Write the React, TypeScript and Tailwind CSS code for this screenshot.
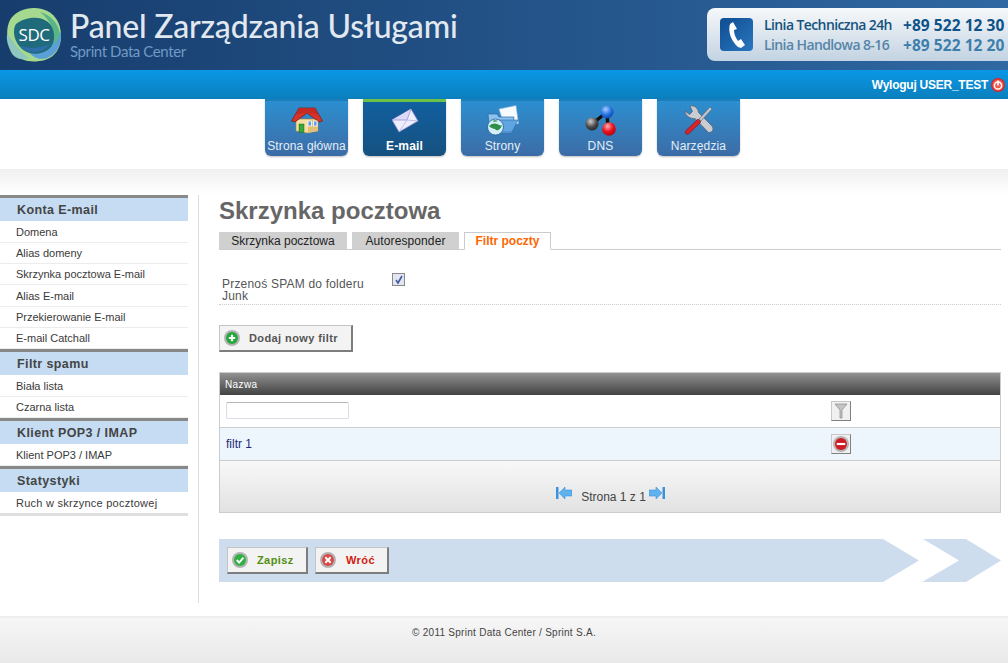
import React from 'react';

const sideMenu = [
  {
    title: 'Konta E-mail',
    items: [
      { label: 'Domena' },
      { label: 'Alias domeny' },
      { label: 'Skrzynka pocztowa E-mail' },
      { label: 'Alias E-mail', tall: true },
      { label: 'Przekierowanie E-mail' },
      { label: 'E-mail Catchall' },
    ],
  },
  { title: 'Filtr spamu', items: [{ label: 'Biała lista' }, { label: 'Czarna lista' }] },
  { title: 'Klient POP3 / IMAP', items: [{ label: 'Klient POP3 / IMAP' }] },
  { title: 'Statystyki', items: [{ label: 'Ruch w skrzynce pocztowej', wide: true }] },
];

const Logo = () => (
  <svg width="56" height="56" viewBox="0 0 56 56" className="shrink-0">
    <path d="M4 14C10 4 24 0 36 3c12 3 19 13 19 27 0 12-6 21-16 24-12 3-25 2-32-8C1 37-1 24 4 14z" fill="#a5d98f" />
    <path d="M1 28c6 6 10 16 22 24-8 3-15 0-18-6C2 40 0 34 1 28z" fill="#8fc6bd" />
    <path d="M18 40c10 2 26-2 37-14 1 12-4 22-14 26-9 3-17-2-23-12z" fill="#5a9fd8" />
    <path d="M34 6c10 3 18 10 20 22-1 4-3 8-6 11 2-12-4-26-14-33z" fill="#59b487" />
    <path d="M10 18c8-7 24-9 32-2 7 6 8 18 3 25-6 7-18 9-26 4C10 40 5 26 10 18z" fill="#1f6b7c" />
    <path d="M14 40c10 3 22 2 30-2-5 8-17 10-25 6-2-1-4-2-5-4z" fill="#2e6eaa" />
    <text x="28" y="35" textAnchor="middle" fill="#fff" fontSize="17" fontFamily="'Open Sans', sans-serif" letterSpacing="-0.5">SDC</text>
  </svg>
);

const HomeIcon = () => (
  <svg width="32" height="27" viewBox="0 0 32 27">
    <path d="M5 12h22v12l-11 2-11-2z" fill="#f6dfa0" stroke="#a98444" strokeWidth="0.6" />
    <path d="M17 26l10-2V12H17z" fill="#e2bf78" />
    <path d="M0.5 14 8 1h16l7.5 13-3.5 1L16 6 4 15z" fill="#d8322a" stroke="#6d2a1c" strokeWidth="0.8" />
    <path d="M8 1.500h16l3 6-11-2-11 2z" fill="#c72a24" />
    <rect x="8" y="17" width="5" height="8.500" fill="#38a63a" stroke="#1c6b24" strokeWidth="0.5" />
    <rect x="17" y="14" width="3.500" height="5" fill="#5aa0e8" stroke="#fff" strokeWidth="0.8" />
    <rect x="22.500" y="14" width="3.500" height="5" fill="#5aa0e8" stroke="#fff" strokeWidth="0.8" />
  </svg>
);

const MailIcon = () => (
  <svg width="28" height="25" viewBox="0 0 28 25">
    <path d="M1 12 20 1l7 12-19 11z" fill="#efeefe" stroke="#8a84c8" strokeWidth="0.8" />
    <path d="M1 12 16 12 20 1" fill="#dcdaf8" stroke="#9b96d4" strokeWidth="0.8" />
    <path d="M8 24l8-12 11 1" fill="none" stroke="#b5b1e2" strokeWidth="0.8" />
  </svg>
);

const FolderIcon = () => (
  <svg width="32" height="31" viewBox="0 0 32 31">
    <path d="M12 4 29 0.500l2.500 18-14 3z" fill="#f7faff" stroke="#8fb4d8" strokeWidth="0.6" />
    <path d="M1 9h9l2 3h15l-2 16H3z" fill="#8dc3ee" stroke="#2a6aa8" strokeWidth="0.7" />
    <path d="M8 15h23l-6 12H8z" fill="#5ea5e2" stroke="#2a6aa8" strokeWidth="0.6" />
    <circle cx="8.500" cy="22" r="8" fill="#d4eefa" stroke="#1d5f94" strokeWidth="0.8" />
    <path d="M2 21c3-3 6-3 8-2s4 2 5 1c-1 4-4 6-6 5-1-2-5-1-7-4z" fill="#2f8f4a" />
    <path d="M5 16c2-1 4-1 6 0-2 1-4 1-6 0z" fill="#2f8f4a" />
  </svg>
);

const DnsIcon = () => (
  <svg width="32" height="31" viewBox="0 0 32 31">
    <defs>
      <radialGradient id="dnsBlue" cx="0.4" cy="0.3" r="0.8">
        <stop offset="0" stopColor="#a8ccff" />
        <stop offset="0.55" stopColor="#1f6fe0" />
        <stop offset="1" stopColor="#0b3f9a" />
      </radialGradient>
      <radialGradient id="dnsGray" cx="0.4" cy="0.3" r="0.8">
        <stop offset="0" stopColor="#d0d0d0" />
        <stop offset="0.55" stopColor="#4a4a4a" />
        <stop offset="1" stopColor="#1c1c1c" />
      </radialGradient>
      <radialGradient id="dnsRed" cx="0.4" cy="0.3" r="0.8">
        <stop offset="0" stopColor="#ffb0b0" />
        <stop offset="0.5" stopColor="#ee0f1c" />
        <stop offset="1" stopColor="#a00610" />
      </radialGradient>
    </defs>
    <path d="M22 7 7 19M22 7l1 17" stroke="#111" strokeWidth="3.500" />
    <circle cx="22" cy="7" r="6.500" fill="url(#dnsBlue)" />
    <circle cx="7" cy="19" r="6.500" fill="url(#dnsGray)" />
    <circle cx="24" cy="24" r="6.800" fill="url(#dnsRed)" />
  </svg>
);

const ToolsIcon = () => (
  <svg width="30" height="30" viewBox="0 0 30 30">
    <path d="M6 1c4-1 8 2 8.500 6.500L28 21c2 2.500 1 7-3.500 6.500L11 13.500C6 14 1 10.500 1 6l4.500 3.500 3-3z" fill="#c9cdd3" stroke="#5d6168" strokeWidth="0.8" />
    <path d="M1.500 26 14 14l3 3L4.500 29c-2 1-4-1-3-3z" fill="#d8232a" stroke="#7a1418" strokeWidth="0.6" />
    <path d="M15 14 26 2l2 2-11 12z" fill="#c2c6cc" stroke="#5d6168" strokeWidth="0.6" />
  </svg>
);

const RoundIcon = ({ fill, children }: { fill: string; children: React.ReactNode }) => (
  <svg width="16" height="16" viewBox="0 0 15 15">
    <circle cx="7.500" cy="7.500" r="7.500" fill="#b4b4b4" />
    <circle cx="7.500" cy="7.500" r="5.600" fill={fill} />
    {children}
  </svg>
);

const navTabs = [
  { label: 'Strona główna', icon: <HomeIcon /> },
  { label: 'E-mail', icon: <MailIcon />, active: true },
  { label: 'Strony', icon: <FolderIcon /> },
  { label: 'DNS', icon: <DnsIcon /> },
  { label: 'Narzędzia', icon: <ToolsIcon /> },
];

const ActionButton = ({ icon, label, color, className }: { icon: React.ReactNode; label: string; color: string; className: string }) => (
  <button className={`flex h-[27px] items-center bg-[#f3f3f3] border border-[#c4c4c4] border-r-2 border-b-2 border-r-[#7d7d7d] border-b-[#7d7d7d] pl-[4px] text-[11px] font-bold tracking-[0.4px] ${color} ${className}`}>
    {icon}
    {label}
  </button>
);

const PagerArrow = ({ flip }: { flip?: boolean }) => (
  <svg width="16" height="15" viewBox="0 0 16 15" className={flip ? '-scale-x-100' : ''}>
    <rect x="0" y="1" width="2.500" height="12" fill="#3b93dc" />
    <path d="M3 7 9 1v3h7v6H9v3z" fill="#5fb2ee" stroke="#3b93dc" strokeWidth="0.6" />
  </svg>
);

export default function App() {
  return (
    <div className="w-[1008px] h-[663px] overflow-hidden bg-white font-['Liberation_Sans',Arial,sans-serif] text-[#444]">
      <header className="flex h-[70px] bg-gradient-to-r from-[#173d6d] to-[#2f68a2]">
        <div className="ml-[6px] mt-[6px]">
          <Logo />
        </div>
        <div className="ml-[8px] mt-[7px] font-['Lato',sans-serif]">
          <div className="h-[37px] text-[32px] font-medium leading-[37px] tracking-[-0.2px] text-[#e2e8f0] whitespace-nowrap">Panel Zarządzania Usługami</div>
          <div className="text-[15px] leading-[14px] tracking-[-0.4px] text-[#6f9ac4]">Sprint Data Center</div>
        </div>
        <div className="ml-auto mt-[8px] flex h-[53px] w-[301px] items-center rounded-l-lg bg-gradient-to-b from-[#f6f8fa] to-[#c3d3e2] pl-[13px]">
          <div className="flex h-[33px] w-[33px] items-center justify-center rounded-[4px] bg-gradient-to-br from-[#0e4d91] to-[#2a77bf]">
            <svg width="20" height="28" viewBox="0 0 20 28">
              <path d="M6 1 3 3C1 9 3 19 11 26l3 1 4-3-4-6-3 2C8 16 7 12 7 9l3-1z" fill="#fff" />
            </svg>
          </div>
          <div className="ml-[11px] font-['Open_Sans',sans-serif] text-[14px] leading-[20px] tracking-[-0.6px] whitespace-nowrap">
            <div className="flex font-semibold text-[#15527f]">
              <span className="w-[139px]">Linia Techniczna 24h</span>
              <span className="text-[15.5px] font-bold tracking-[0.05px] text-[#0e5388]">+89 522 12 30</span>
            </div>
            <div className="flex font-semibold text-[#5585a8]">
              <span className="w-[139px]">Linia Handlowa 8-16</span>
              <span className="text-[15.5px] font-bold tracking-[0.05px] text-[#3d7eac]">+89 522 12 20</span>
            </div>
          </div>
        </div>
      </header>

      <div className="flex h-[29px] items-center justify-end bg-gradient-to-b from-[#0a97e6] to-[#0b7fbd] pr-[3px] text-[12px] font-bold tracking-[-0.25px] text-white">
        <span className="mt-[1px]">Wyloguj USER_TEST</span>
        <svg width="14" height="14" viewBox="0 0 14 14" className="ml-[3px]">
          <circle cx="7" cy="7" r="7" fill="#d8282c" />
          <circle cx="7" cy="7" r="5.500" fill="#ee5a50" />
          <circle cx="7" cy="7.500" r="3.600" fill="none" stroke="#fff" strokeWidth="1.500" />
          <path d="M7 2.500v5" stroke="#fff" strokeWidth="1.600" />
        </svg>
      </div>

      <nav className="flex h-[70px] gap-[15px] pl-[265px]">
        {navTabs.map((tab) => (
          <div
            key={tab.label}
            className={`flex h-[57px] w-[83px] flex-col items-center rounded-b-[6px] shadow-[0_1px_2px_rgba(0,0,0,0.25)] ${
              tab.active
                ? 'border-t-[3px] border-t-[#6cc04a] bg-gradient-to-b from-[#105f9f] to-[#16517f] font-bold text-white'
                : 'border-t-[2px] border-t-[#1b7dbb] bg-gradient-to-b from-[#2a8fd0] to-[#3b6ca6] text-[#e3eef7]'
            }`}
          >
            <div className={`flex items-center justify-center ${tab.active ? 'h-[37px]' : 'h-[38px]'}`}>{tab.icon}</div>
            <span className="text-[12px] leading-[14px] tracking-[0.15px] whitespace-nowrap">{tab.label}</span>
          </div>
        ))}
      </nav>

      <div className="h-[26px] bg-gradient-to-b from-[#f1f1f1] to-white border-t border-t-[#eeeeee]" />

      <div className="flex h-[421px]">
        <aside className="w-[188px] shrink-0">
          {sideMenu.map((section) => (
            <div key={section.title} className="border-t-[3px] border-t-[#888888]">
              <div className="flex h-[24px] items-center bg-[#c5dcf3] pl-[17px] pt-[1px] text-[12.5px] font-bold tracking-[0.4px] text-[#444] border-b border-b-white">
                {section.title}
              </div>
              {section.items.map((item) => (
                <div
                  key={item.label}
                  className={`flex items-center border-b border-b-[#ececec] pl-[16px] text-[11px] text-[#3a3a3a] ${item.tall ? 'h-[22px] pt-[1px]' : 'h-[21px]'} ${item.wide ? 'tracking-[0.25px]' : ''}`}
                >
                  {item.label}
                </div>
              ))}
            </div>
          ))}
          <div className="h-[3px] bg-[#dfdfdf] -mt-[1px]" />
        </aside>

        <div className="ml-[10px] h-[408px] w-px bg-[#dddddd]" />

        <main className="ml-[20px] w-[782px]">
          <h1 className="h-[37px] text-[24px] font-bold leading-[32px] text-[#666]">Skrzynka pocztowa</h1>

          <div className="flex h-[18px] gap-[5px] border-b border-b-[#cccccc] text-[12px]">
            <div className="flex h-[17px] w-[128px] items-center justify-center bg-[#d0d0d0] text-[#222]">Skrzynka pocztowa</div>
            <div className="flex h-[17px] w-[107px] items-center justify-center bg-[#d0d0d0] tracking-[0.1px] text-[#222]">Autoresponder</div>
            <div className="flex h-[18px] w-[87px] items-center justify-center bg-white border border-[#cccccc] border-b-white font-bold text-[#ff6600]">Filtr poczty</div>
          </div>

          <div className="mt-[23px] flex h-[32px] border-b border-dotted border-b-[#cccccc]">
            <div className="ml-[3px] mr-[20px] mt-[5px] w-[150px] text-[12px] leading-[12px] tracking-[0.2px] text-[#555]">
              Przenoś SPAM do folderu Junk
            </div>
            <div className="flex h-[13px] w-[13px] items-center justify-center border border-[#8a8a8a] bg-[#e2e6f0]">
              <svg width="10" height="10" viewBox="0 0 10 10">
                <path d="M2 5l2 3 4-7" fill="none" stroke="#43589c" strokeWidth="1.600" />
              </svg>
            </div>
          </div>

          <ActionButton
            className="mt-[20px] w-[134px]"
            color="text-[#555]"
            label="Dodaj nowy filtr"
            icon={
              <span className="mr-[9px] flex">
                <RoundIcon fill="#22a93a">
                  <path d="M7.500 4.500v6M4.500 7.500h6" stroke="#fff" strokeWidth="2" />
                </RoundIcon>
              </span>
            }
          />

          <div className="mt-[20px] border border-[#cccccc]">
            <div className="flex h-[22px] items-center bg-gradient-to-b from-[#929292] to-[#434343] pl-[5px] text-[10px] tracking-[0.4px] text-white">
              Nazwa
            </div>
            <div className="flex h-[33px] items-center border-b border-b-[#cccccc] pb-[1px] pl-[6px]">
              <input className="h-[17px] w-[123px] rounded-[2px] border border-[#dcdce6] border-t-[#b4b4b4] bg-white outline-none" />
              <button className="ml-[482px] flex h-[20px] w-[20px] items-center justify-center bg-[#f0f0f0] border border-[#c8c8c8] border-r-[#808080] border-b-[#808080]">
                <svg width="14" height="16" viewBox="0 0 14 16">
                  <path d="M1 1h12L8 7v8H6V7z" fill="#c4c4c4" stroke="#8b8b8b" strokeWidth="0.7" />
                </svg>
              </button>
            </div>
            <div className="flex h-[33px] items-center border-b border-b-[#cccccc] bg-[#eef6fd] pl-[6px] text-[12px] text-[#1a2a78]">
              <span className="w-[605px]">filtr 1</span>
              <button className="flex h-[20px] w-[20px] items-center justify-center bg-[#f0f0f0] border border-[#c8c8c8] border-r-[#808080] border-b-[#808080]">
                <RoundIcon fill="#cf1a24">
                  <rect x="3.500" y="6.500" width="8" height="2" fill="#fff" />
                </RoundIcon>
              </button>
            </div>
            <div className="flex h-[51px] items-end justify-center bg-gradient-to-b from-[#f8f8f8] to-[#e2e2e2] pb-[11px] pl-[1px] text-[12px] text-[#444]">
              <PagerArrow />
              <span className="ml-[9px] mr-[3px] -mb-[3px] leading-[14px]">Strona 1 z 1</span>
              <PagerArrow flip />
            </div>
          </div>

          <div className="mt-[26px] flex h-[43px]">
            <div className="flex w-[664px] items-center gap-[7px] bg-[#cedded] pl-[8px]">
              <ActionButton
                className="w-[81px]"
                color="text-[#4f8f10]"
                label="Zapisz"
                icon={
                  <span className="mr-[9px] flex">
                    <RoundIcon fill="#2fb041">
                      <path d="M4.500 7.500l2.200 2.400 4-4.600" fill="none" stroke="#fff" strokeWidth="1.800" />
                    </RoundIcon>
                  </span>
                }
              />
              <ActionButton
                className="w-[74px]"
                color="text-[#d2200f]"
                label="Wróć"
                icon={
                  <span className="mr-[10px] flex">
                    <RoundIcon fill="#d64a4a">
                      <path d="M5 5l5 5M10 5l-5 5" stroke="#fff" strokeWidth="1.900" />
                    </RoundIcon>
                  </span>
                }
              />
            </div>
            <svg width="118" height="43" viewBox="0 0 118 43" className="shrink-0">
              <path d="M0 0l36 21.500L0 43z" fill="#cedded" />
              <path d="M40 0h43l35 21.500L83 43H39l37-21.500z" fill="#cedded" />
            </svg>
          </div>
        </main>
      </div>

      <footer className="h-[47px] border-t-2 border-t-[#eeeeee] bg-gradient-to-b from-[#f6f6f6] to-[#e9e9e9] pt-[8px] text-center text-[10px] leading-[14px] tracking-[0.27px] text-[#444]">
        © 2011 Sprint Data Center / Sprint S.A.
      </footer>
    </div>
  );
}
